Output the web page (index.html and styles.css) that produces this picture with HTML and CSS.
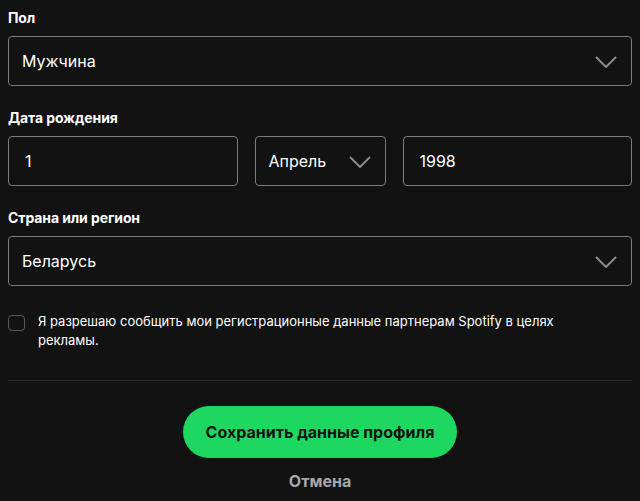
FILE: index.html
```html
<!DOCTYPE html>
<html lang="ru">
<head>
<meta charset="utf-8">
<title>Профиль</title>
<link rel="stylesheet" href="styles.css">
</head>
<body>
<form class="form">
  <div class="field">
    <label class="label">Пол</label>
    <div class="box select">
      <span class="value">Мужчина</span>
      <svg class="chev" width="22" height="12" viewBox="0 0 22 12"><path d="M1 1 L11 11 L21 1" fill="none" stroke="#8a8a8a" stroke-width="2"/></svg>
    </div>
  </div>
  <div class="field">
    <label class="label">Дата рождения</label>
    <div class="date-row">
      <div class="box input"><span class="value">1</span></div>
      <div class="box select month">
        <span class="value">Апрель</span>
        <svg class="chev" width="22" height="12" viewBox="0 0 22 12"><path d="M1 1 L11 11 L21 1" fill="none" stroke="#8a8a8a" stroke-width="2"/></svg>
      </div>
      <div class="box input"><span class="value">1998</span></div>
    </div>
  </div>
  <div class="field">
    <label class="label">Страна или регион</label>
    <div class="box select">
      <span class="value">Беларусь</span>
      <svg class="chev" width="22" height="12" viewBox="0 0 22 12"><path d="M1 1 L11 11 L21 1" fill="none" stroke="#8a8a8a" stroke-width="2"/></svg>
    </div>
  </div>
  <div class="consent">
    <span class="checkbox"></span>
    <p class="consent-text">Я разрешаю сообщить мои регистрационные данные партнерам Spotify в целях рекламы.</p>
  </div>
  <hr class="divider">
  <div class="actions">
    <button type="button" class="save">Сохранить данные профиля</button>
    <button type="button" class="cancel">Отмена</button>
  </div>
</form>
</body>
</html>
```
FILE: styles.css
```css
html, body {
  background: #121212;
}
body {
  margin: 0;
  padding: 0 8px;
  font-family: Inter, "Noto Sans", sans-serif;
  color: #ffffff;
}
.form {
  display: flex;
  flex-direction: column;
  padding-top: 8px;
}
.field {
  display: flex;
  flex-direction: column;
  gap: 8px;
  margin-bottom: 22px;
}
.label {
  font-size: 14px;
  font-weight: 700;
  line-height: 20px;
  letter-spacing: -0.1px;
}
.box {
  box-sizing: border-box;
  height: 50px;
  border: 1px solid #7c7c7c;
  border-radius: 4px;
  display: flex;
  align-items: center;
  font-size: 16px;
}
.select {
  justify-content: space-between;
  padding: 0 14px 0 13px;
}
.input {
  padding: 0 16px;
}
.date-row {
  display: grid;
  grid-template-columns: 1fr 131px 1fr;
  gap: 17px;
}
.value {
  color: #ffffff;
}
.chev {
  display: block;
  margin-top: 1px;
}
.consent {
  display: flex;
  align-items: flex-start;
  gap: 13px;
  margin-top: 4px;
}
.checkbox {
  flex: none;
  box-sizing: border-box;
  width: 17px;
  height: 16px;
  margin-top: 3px;
  border: 1px solid #575757;
  border-radius: 4px;
}
.consent-text {
  margin: 0;
  font-size: 13px;
  line-height: 19px;
  color: #ffffff;
  max-width: 560px;
}
.divider {
  border: 0;
  border-top: 1px solid #292929;
  margin: 30px 0 25px;
}
.actions {
  display: flex;
  flex-direction: column;
  align-items: center;
  gap: 9px;
}
.save {
  height: 52px;
  padding: 0 23px;
  border: 0;
  border-radius: 26px;
  background: #1ed760;
  color: #121212;
  font-family: Inter, "Noto Sans", sans-serif;
  font-size: 16px;
  font-weight: 700;
}
.cancel {
  border: 0;
  background: none;
  padding: 4px 0;
  color: #a7a7a7;
  font-family: Inter, "Noto Sans", sans-serif;
  font-size: 16px;
  font-weight: 700;
}
```
